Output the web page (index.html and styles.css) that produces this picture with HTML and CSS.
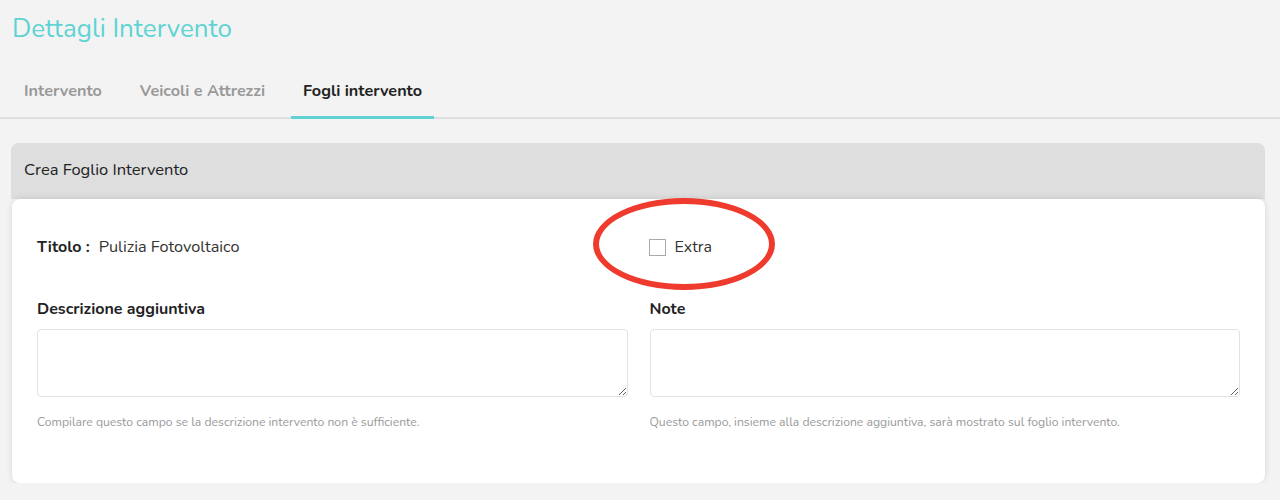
FILE: index.html
```html
<!DOCTYPE html>
<html lang="it">

<head>
	<meta charset="UTF-8" />
	<meta name="viewport" content="width=device-width, initial-scale=1.0" />
	<title>Dettagli Intervento</title>
	<link rel="stylesheet" href="styles.css">
</head>

<body>
	<h1 class="page-title">Dettagli Intervento</h1>

	<div class="tabs">
		<span class="tab">Intervento</span>
		<span class="tab">Veicoli e Attrezzi</span>
		<span class="tab active">Fogli intervento</span>
	</div>

	<div class="card">
		<div class="card-head">Crea Foglio Intervento</div>
		<div class="card-body">
			<div class="row top">
				<div class="col">
					<span class="label">Titolo :</span>
					<span class="value">Pulizia Fotovoltaico</span>
				</div>
				<div class="col">
					<label class="check">
						<span class="box"></span>
						<span>Extra</span>
						<span class="circle"></span>
					</label>
				</div>
			</div>
			<div class="row">
				<div class="col">
					<div class="field-label">Descrizione aggiuntiva</div>
					<textarea></textarea>
					<div class="help">Compilare questo campo se la descrizione intervento non è sufficiente.</div>
				</div>
				<div class="col">
					<div class="field-label">Note</div>
					<textarea></textarea>
					<div class="help">Questo campo, insieme alla descrizione aggiuntiva, sarà mostrato sul foglio intervento.</div>
				</div>
			</div>
		</div>
	</div>
</body>

</html>
```

FILE: styles.css
```css
html {
	width: 100%;
	height: 100%;
}

body {
	margin: 0;
	background: #f3f3f3;
	font-family: "Nunito", "Lato", "Noto Sans", sans-serif;
	color: #222;
	overflow: hidden;
}

.page-title {
	margin: 0;
	padding: 12px 0 0 12px;
	font-size: 26px;
	font-weight: 400;
	line-height: 34px;
	color: #5fd3d4;
}

.tabs {
	display: flex;
	margin-top: 35px;
	padding-left: 12px;
	border-bottom: 2px solid #dedede;
}

.tab {
	padding: 0 12px 15px;
	margin-right: 14px;
	font-size: 16.2px;
	font-weight: 700;
	line-height: 20px;
	color: #999;
	margin-bottom: -2px;
	border-bottom: 3px solid transparent;
}

.tab.active {
	color: #222;
	border-bottom-color: #5fd3d4;
}

.card {
	margin: 24px 15px 0 11px;
}

.card-head {
	background: #dedede;
	border-radius: 8px 8px 0 0;
	padding: 16px 13px 0;
	height: 40px;
	font-size: 16.5px;
	line-height: 22px;
	color: #222;
}

.card-body {
	background: #fff;
	border-radius: 8px;
	box-shadow: 0 0 6px rgba(0, 0, 0, 0.12);
	margin-left: 1px;
	padding: 37px 25px 53px 25px;
	display: flex;
	flex-direction: column;
	gap: 40px;
}

.row {
	display: grid;
	grid-template-columns: 1fr 1fr;
	column-gap: 22px;
}

.row.top .col {
	display: flex;
	align-items: center;
	height: 22px;
}

.label {
	font-size: 16px;
	font-weight: 700;
	margin-right: 9px;
}

.value {
	font-size: 16.3px;
	color: #333;
}

.check {
	position: relative;
	display: flex;
	align-items: center;
	gap: 9px;
	margin-left: -1px;
	font-size: 16px;
	color: #333;
}

.box {
	width: 15px;
	height: 15px;
	border: 1px solid #aaa;
	background: #fff;
}

.circle {
	position: absolute;
	left: -56px;
	top: -38px;
	width: 170px;
	height: 80px;
	border: 6px solid #ef3a2e;
	border-radius: 50%;
	pointer-events: none;
}

.field-label {
	font-size: 16px;
	font-weight: 700;
	line-height: 22px;
	margin-bottom: 9px;
}

textarea {
	display: block;
	width: 100%;
	height: 68px;
	box-sizing: border-box;
	border: 1px solid #e2e2e2;
	border-radius: 4px;
	resize: vertical;
	font-family: inherit;
}

.help {
	margin-top: 17px;
	font-size: 12.2px;
	color: #999;
}
```
